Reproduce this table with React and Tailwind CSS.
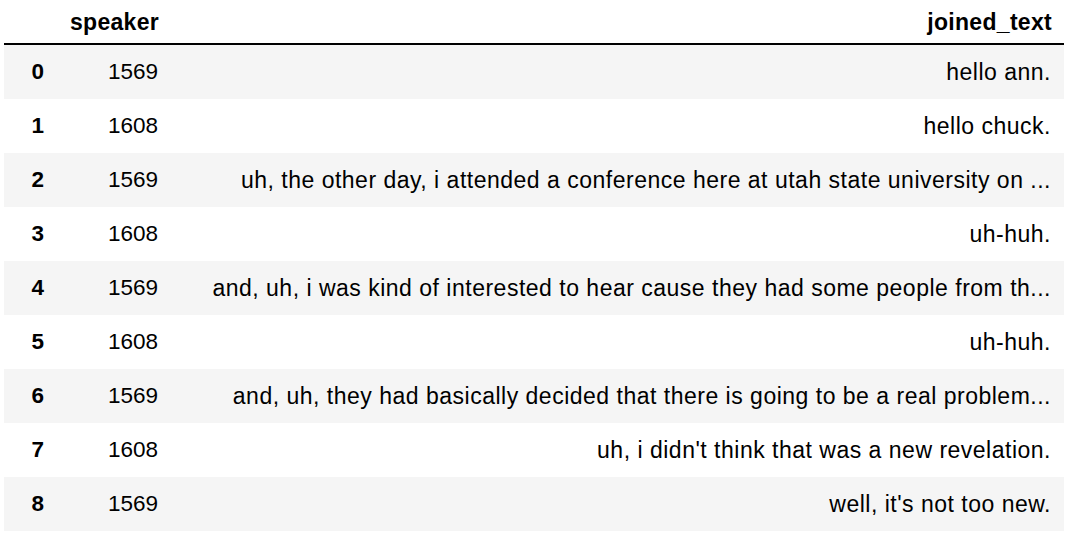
const rows = [
  [0, 1569, 'hello ann.'],
  [1, 1608, 'hello chuck.'],
  [2, 1569, 'uh, the other day, i attended a conference here at utah state university on ...'],
  [3, 1608, 'uh-huh.'],
  [4, 1569, 'and, uh, i was kind of interested to hear cause they had some people from th...'],
  [5, 1608, 'uh-huh.'],
  [6, 1569, 'and, uh, they had basically decided that there is going to be a real problem...'],
  [7, 1608, "uh, i didn't think that was a new revelation."],
  [8, 1569, "well, it's not too new."],
]

export default function App() {
  return (
    <div
      className="w-[1068px] h-[534px] overflow-hidden bg-white pl-[4px] pr-[4px] text-black"
      style={{ fontFamily: '"Liberation Sans", Arial, Helvetica, sans-serif' }}
    >
      <div className="flex h-[45px] items-center border-b-2 border-black pt-[2px] text-[23px] font-bold tracking-[0.3px]">
        <div className="w-[53px]" />
        <div className="w-[114px] pr-[12px] text-right">speaker</div>
        <div className="flex-1 pr-[12px] text-right">joined_text</div>
      </div>
      {rows.map(([i, sp, txt]) => (
        <div
          key={i}
          className={
            'flex h-[54px] items-center text-[22.5px] ' + (i % 2 === 0 ? 'bg-[#f5f5f5]' : 'bg-white')
          }
        >
          <div className="w-[53px] pr-[13px] text-right font-bold">{i}</div>
          <div className="w-[114px] pr-[13px] text-right">{sp}</div>
          <div className="flex-1 pr-[13px] text-right whitespace-nowrap text-[23px] tracking-[0.5px]">{txt}</div>
        </div>
      ))}
    </div>
  )
}
